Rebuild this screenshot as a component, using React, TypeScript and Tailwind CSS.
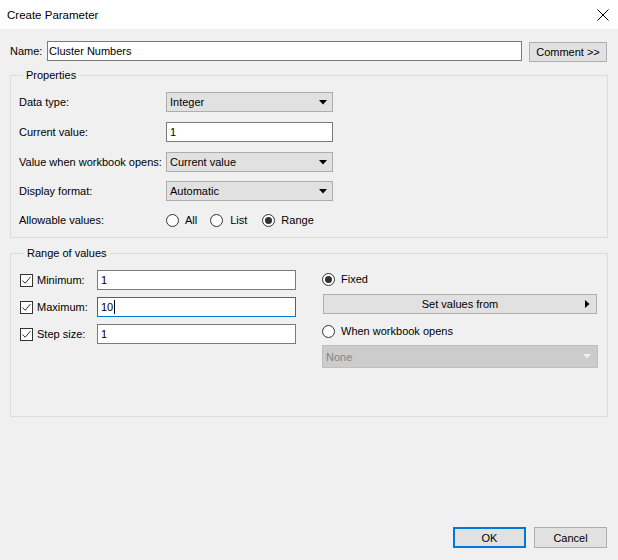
const font = "font-['Segoe_UI','Liberation_Sans',Arial,sans-serif] text-[11px] leading-[16px] whitespace-nowrap"

const Caret = ({ color = '#000' }: { color?: string }) => (
  <svg width='8' height='5' viewBox='0 0 8 5'>
    <path d='M0 0 H8 L4 4.5 Z' fill={color} />
  </svg>
)

const Radio = ({ checked }: { checked?: boolean }) => (
  <span className='flex items-center justify-center w-[13px] h-[13px] rounded-full border border-[#333] bg-white'>
    {checked && <span className='w-[7px] h-[7px] rounded-full bg-[#333]' />}
  </span>
)

const Check = () => (
  <span className='flex items-center justify-center w-[13px] h-[13px] border border-[#333] bg-white'>
    <svg width='11' height='11' viewBox='0 0 11 11'>
      <path d='M1.5 5.5 L4.2 8.2 L9.5 2' stroke='#333' strokeWidth='1' fill='none' />
    </svg>
  </span>
)

const Select = ({ value }: { value: string }) => (
  <div className='flex items-center justify-between w-[167px] h-[20px] border border-[#adadad] bg-[#e1e1e1] pl-[3px] pr-[5px]'>
    <span>{value}</span>
    <Caret />
  </div>
)

const Row = ({ label, children }: { label: string; children: React.ReactNode }) => (
  <div className='flex items-center h-[20px]'>
    <span className='w-[147px] shrink-0'>{label}</span>
    {children}
  </div>
)

const RangeRow = ({ label, value, focused }: { label: string; value: string; focused?: boolean }) => (
  <div className='flex items-center h-[20px]'>
    <Check />
    <span className='ml-[4px] w-[60px]'>{label}</span>
    <div
      className={
        focused
          ? 'flex items-center w-[199px] h-[20px] bg-white border border-[#0078d7] pl-[3px]'
          : 'flex items-center w-[199px] h-[20px] bg-white border border-[#7a7a7a] pl-[3px]'
      }
    >
      {value}
      {focused && <span className='ml-[1px] w-px h-[14px] bg-black' />}
    </div>
  </div>
)

export default function App() {
  return (
    <div className={`w-[618px] h-[560px] flex flex-col bg-[#f0f0f0] text-black ${font}`}>
      <div className='flex items-center justify-between h-[29px] bg-white pl-[7px] pr-[9px] text-[11.5px]'>
        <span>Create Parameter</span>
        <svg width='12' height='12' viewBox='0 0 12 12'>
          <path d='M0.5 0.5 L11.5 11.5 M11.5 0.5 L0.5 11.5' stroke='#000' strokeWidth='1' />
        </svg>
      </div>

      <div className='flex flex-col flex-1 px-[10px] pb-[12px]'>
        <div className='flex items-center mt-[12px] h-[20px]'>
          <span className='w-[37px]'>Name:</span>
          <div className='flex items-center w-[475px] h-[20px] bg-white border border-[#7a7a7a] pl-[1px]'>
            Cluster Numbers
          </div>
          <button className='ml-[7px] mt-[1px] w-[78px] h-[20px] border border-[#adadad] bg-[#e1e1e1]'>
            Comment &gt;&gt;
          </button>
        </div>

        <fieldset className='mt-[6px] border border-[#dcdcdc] pl-[8px] pb-[7px]'>
          <legend className='ml-[4px] px-[3px]'>Properties</legend>
          <div className='flex flex-col mt-[9px]'>
            <Row label='Data type:'>
              <Select value='Integer' />
            </Row>
            <div className='mt-[10px]'>
              <Row label='Current value:'>
                <div className='flex items-center w-[167px] h-[20px] bg-white border border-[#7a7a7a] pl-[3px]'>1</div>
              </Row>
            </div>
            <div className='mt-[10px]'>
              <Row label='Value when workbook opens:'>
                <Select value='Current value' />
              </Row>
            </div>
            <div className='mt-[9px]'>
              <Row label='Display format:'>
                <Select value='Automatic' />
              </Row>
            </div>
            <div className='mt-[9px]'>
              <Row label='Allowable values:'>
                <div className='flex items-center'>
                  <Radio />
                  <span className='ml-[6px]'>All</span>
                  <span className='ml-[13px]'>
                    <Radio />
                  </span>
                  <span className='ml-[7px]'>List</span>
                  <span className='ml-[15px]'>
                    <Radio checked />
                  </span>
                  <span className='ml-[6px]'>Range</span>
                </div>
              </Row>
            </div>
          </div>
        </fieldset>

        <fieldset className='mt-[7px] h-[172px] border border-[#dcdcdc] pl-[9px]'>
          <legend className='ml-[4px] px-[3px]'>Range of values</legend>
          <div className='flex mt-[9px]'>
            <div className='flex flex-col gap-[7px] w-[302px]'>
              <RangeRow label='Minimum:' value='1' />
              <RangeRow label='Maximum:' value='10' focused />
              <RangeRow label='Step size:' value='1' />
            </div>
            <div className='flex flex-col w-[276px]'>
              <div className='flex items-center h-[18px]'>
                <Radio checked />
                <span className='ml-[6px]'>Fixed</span>
              </div>
              <div className='relative flex items-center justify-center ml-[1px] mt-[6px] w-[274px] h-[20px] border border-[#adadad] bg-[#e1e1e1]'>
                Set values from
                <svg className='absolute right-[6px]' width='5' height='8' viewBox='0 0 5 8'>
                  <path d='M0 0 L4.5 4 L0 8 Z' fill='#000' />
                </svg>
              </div>
              <div className='flex items-center h-[18px] mt-[8px]'>
                <Radio />
                <span className='ml-[6px]'>When workbook opens</span>
              </div>
              <div className='flex items-center justify-between mt-[5px] h-[23px] border border-[#bfbfbf] bg-[#cccccc] pl-[3px] pr-[6px] text-[#838383]'>
                <span>None</span>
                <Caret color='#f0f0f0' />
              </div>
            </div>
          </div>
        </fieldset>

        <div className='flex justify-end gap-[8px] mt-auto pr-px'>
          <button className='w-[73px] h-[21px] border-2 border-[#0078d7] bg-[#e1e1e1]'>OK</button>
          <button className='w-[73px] h-[21px] border border-[#adadad] bg-[#e1e1e1]'>Cancel</button>
        </div>
      </div>
    </div>
  )
}
